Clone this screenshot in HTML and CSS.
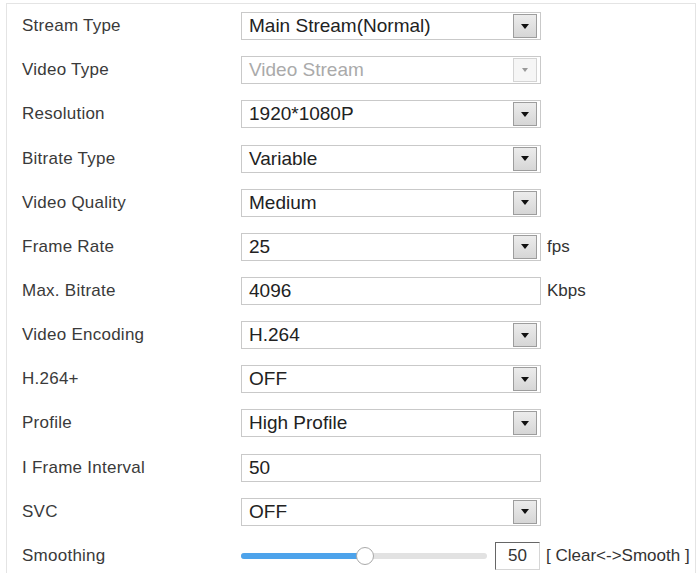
FILE: index.html
```html
<!DOCTYPE html>
<html>
<head>
    <title>Video Settings</title>
    <meta charset="UTF-8">
    <link rel="stylesheet" href="styles.css">
</head>
<body>
    <div class="panel">
        <div class="rows">
            <div class="row">
                <span class="label">Stream Type</span>
                <div class="select"><span class="value">Main Stream(Normal)</span><span class="arrow"></span></div>
            </div>
            <div class="row">
                <span class="label">Video Type</span>
                <div class="select disabled"><span class="value">Video Stream</span><span class="arrow"></span></div>
            </div>
            <div class="row">
                <span class="label">Resolution</span>
                <div class="select"><span class="value">1920*1080P</span><span class="arrow"></span></div>
            </div>
            <div class="row">
                <span class="label">Bitrate Type</span>
                <div class="select"><span class="value">Variable</span><span class="arrow"></span></div>
            </div>
            <div class="row">
                <span class="label">Video Quality</span>
                <div class="select"><span class="value">Medium</span><span class="arrow"></span></div>
            </div>
            <div class="row">
                <span class="label">Frame Rate</span>
                <div class="select"><span class="value">25</span><span class="arrow"></span></div>
                <span class="unit">fps</span>
            </div>
            <div class="row">
                <span class="label">Max. Bitrate</span>
                <div class="field">4096</div>
                <span class="unit">Kbps</span>
            </div>
            <div class="row">
                <span class="label">Video Encoding</span>
                <div class="select"><span class="value">H.264</span><span class="arrow"></span></div>
            </div>
            <div class="row">
                <span class="label">H.264+</span>
                <div class="select"><span class="value">OFF</span><span class="arrow"></span></div>
            </div>
            <div class="row">
                <span class="label">Profile</span>
                <div class="select"><span class="value">High Profile</span><span class="arrow"></span></div>
            </div>
            <div class="row">
                <span class="label">I Frame Interval</span>
                <div class="field">50</div>
            </div>
            <div class="row">
                <span class="label">SVC</span>
                <div class="select"><span class="value">OFF</span><span class="arrow"></span></div>
            </div>
            <div class="row">
                <span class="label">Smoothing</span>
                <div class="slider">
                    <div class="track"><div class="fill" style="width: 124px;"></div></div>
                    <span class="thumb" style="left: 115px;"></span>
                </div>
                <div class="num">50</div>
                <span class="hint">[ Clear&lt;-&gt;Smooth ]</span>
            </div>
        </div>
    </div>
</body>
</html>
```

FILE: styles.css
```css
body {
    margin: 0;
    font-family: "Liberation Sans", Arial, sans-serif;
    background: #fff;
    color: #333;
    overflow: hidden;
}
.panel {
    margin: 3px 0 0 6px;
    width: 690px;
    height: 600px;
    border: 1px solid #e4e4e4;
    border-bottom: none;
    padding-left: 15px;
    box-sizing: border-box;
}
.row {
    display: flex;
    align-items: center;
    height: 44.17px;
}
.label {
    width: 219px;
    font-size: 17px;
    letter-spacing: 0.25px;
    color: #3a3a3a;
}
.select, .field {
    width: 300px;
    height: 28px;
    box-sizing: border-box;
    border: 1px solid #c9c9c9;
    background: #fff;
    display: flex;
    align-items: center;
    font-size: 19px;
    color: #222;
}
.select .value, .field {
    padding-left: 7px;
}
.select .value {
    flex: 1;
}
.arrow {
    width: 24px;
    height: 24px;
    box-sizing: border-box;
    margin-right: 3px;
    border: 1px solid #9d9d9d;
    background: linear-gradient(#ececec, #d6d6d6);
    display: flex;
    align-items: center;
    justify-content: center;
}
.arrow::after {
    content: "";
    border-left: 4px solid transparent;
    border-right: 4px solid transparent;
    border-top: 5px solid #111;
}
.disabled .value {
    color: #aaa;
}
.disabled .arrow {
    border-color: #d4d4d4;
    background: #f6f6f6;
}
.disabled .arrow::after {
    border-left-width: 3px;
    border-right-width: 3px;
    border-top: 4px solid #999;
}
.unit {
    margin-left: 6px;
    font-size: 17px;
    color: #333;
}
.slider {
    position: relative;
    width: 246px;
    height: 20px;
    display: flex;
    align-items: center;
}
.track {
    width: 100%;
    height: 6px;
    border-radius: 3px;
    background: #e2e2e2;
    overflow: hidden;
}
.fill {
    height: 100%;
    background: #4da3eb;
}
.thumb {
    position: absolute;
    top: 1px;
    width: 18px;
    height: 18px;
    box-sizing: border-box;
    border-radius: 50%;
    border: 1px solid #a9a9a9;
    background: #fff;
}
.num {
    margin-left: 8px;
    width: 45px;
    height: 28px;
    box-sizing: border-box;
    border: 1px solid #d6d6d6;
    border-top-color: #666;
    border-left-color: #666;
    font-size: 17px;
    text-align: center;
    line-height: 26px;
    color: #333;
}
.hint {
    margin-left: 6px;
    font-size: 17px;
    color: #333;
    white-space: nowrap;
}
```
